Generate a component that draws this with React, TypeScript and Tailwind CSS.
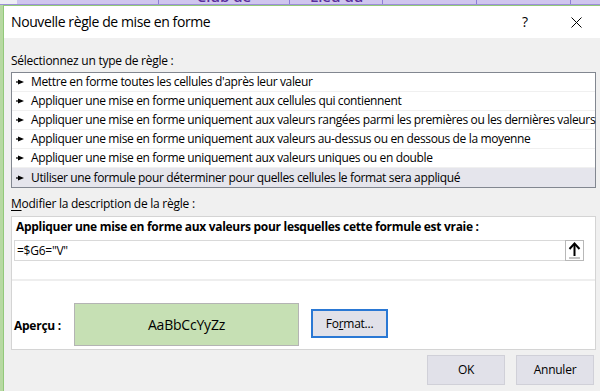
import React from "react";

const rows = [
  "Mettre en forme toutes les cellules d'après leur valeur",
  "Appliquer une mise en forme uniquement aux cellules qui contiennent",
  "Appliquer une mise en forme uniquement aux valeurs rangées parmi les premières ou les dernières valeurs",
  "Appliquer une mise en forme uniquement aux valeurs au-dessus ou en dessous de la moyenne",
  "Appliquer une mise en forme uniquement aux valeurs uniques ou en double",
  "Utiliser une formule pour déterminer pour quelles cellules le format sera appliqué",
];

function Pointer() {
  return (
    <svg width="8" height="6" viewBox="0 0 8 6" className="shrink-0">
      <rect x="0" y="2.4" width="3" height="1.2" fill="#000" />
      <polygon points="2,0.6 8,3 2,5.4" fill="#000" />
    </svg>
  );
}

export default function App() {
  const font = { fontFamily: '"Open Sans", "Noto Sans", sans-serif' };
  return (
    <div
      className="w-[600px] h-[391px] overflow-hidden bg-[#f0f0f0] flex flex-col text-black"
      style={font}
    >
      {/* spreadsheet strip behind */}
      <div className="h-[5px] shrink-0 flex overflow-hidden bg-[#cfc6ee] border-b border-[#9c8fd8]">
        <div className="w-[17px] bg-[#eeeef4]" />
        <div className="w-[142px] border-r border-[#8e7fd4]" />
        <div className="w-[131px] border-r border-[#8e7fd4] flex justify-center">
          <span className="text-[15px] leading-[15px] mt-[-11px] text-[#5a2f9c] font-semibold">Club de</span>
        </div>
        <div className="w-[93px] border-r border-[#8e7fd4] flex justify-start pl-[20px]">
          <span className="text-[15px] leading-[15px] mt-[-11px] text-[#5a2f9c] font-semibold">Lieu du</span>
        </div>
        <div className="w-[94px] border-r border-[#8e7fd4]" />
        <div className="w-[94px] border-r border-[#8e7fd4]" />
        <div className="flex-1" />
      </div>

      <div className="flex flex-1 min-h-0">
        <div className="w-[3px] shrink-0 bg-[#b7d9a2]" />
        <div className="flex-1 flex flex-col border-t border-l border-[#92c97a]">
          {/* Title bar */}
          <div className="h-[32px] shrink-0 bg-white flex items-center pl-[7px]">
            <span className="text-[14px] leading-[20px] tracking-[-0.4px]">Nouvelle règle de mise en forme</span>
            <span className="ml-auto text-[14px] leading-[20px] mr-[43px]">?</span>
            <svg width="11" height="11" viewBox="0 0 11 11" className="mr-[18px]">
              <path d="M0.5 0.5 L10.5 10.5 M10.5 0.5 L0.5 10.5" stroke="#000" strokeWidth="1" />
            </svg>
          </div>

          {/* Body */}
          <div className="flex-1 flex flex-col pl-[7px] pr-[4px] text-[12px] tracking-[-0.25px]">
            <div className="h-[16px] leading-[16px] mt-[15px]">Sélectionnez un type de règle :</div>
            <div className="mt-[3px] w-[585px] h-[116px] border border-[#828790] bg-white flex flex-col">
              {rows.map((r, i) => (
                <div
                  key={i}
                  className={
                    "h-[19px] shrink-0 flex items-center pl-[4px] gap-[7px] whitespace-nowrap tracking-[-0.36px] " +
                    (i === 5 ? "bg-[#e5e5ec]" : "border-b border-[#f0f0f0]")
                  }
                >
                  <Pointer />
                  <span className="leading-[18px]">{r}</span>
                </div>
              ))}
            </div>

            <div className="h-[16px] leading-[16px] mt-[8px]">
              <span className="underline underline-offset-2">M</span>odifier la description de la règle :
            </div>

            <div className="mt-[4px] w-[585px] h-[134px] border border-[#d4d4d4] bg-white flex flex-col">
              <div className="h-[20px] leading-[20px] pl-[4px] font-bold tracking-[-0.3px]">
                Appliquer une mise en forme aux valeurs pour lesquelles cette formule est vraie :
              </div>
              <div className="ml-[2px] mt-[3px] w-[570px] h-[21px] border border-[#d9d9d9] flex items-center">
                <span className="pl-[2px] leading-[18px]">=$G6="V"</span>
                <div className="ml-auto w-[19px] h-[21px] mt-[-1px] mr-[-1px] border border-[#b8b8b8] bg-white flex items-center justify-center">
                  <svg width="13" height="17" viewBox="0 0 13 17">
                    <path d="M6.5 2 L6.5 14" stroke="#000" strokeWidth="2" />
                    <path d="M1.5 7 L6.5 1.5 L11.5 7" stroke="#000" strokeWidth="2" fill="none" />
                    <rect x="1" y="15.5" width="11" height="1" fill="#8a8a8a" />
                  </svg>
                </div>
              </div>
              <div className="mt-[18px] h-[2px] bg-[#eeeeee]" />
              <div className="flex items-start mt-[22px]">
                <div className="mt-[15px] ml-[2px] w-[60px] font-bold leading-[16px]">Aperçu :</div>
                <div className="w-[225px] h-[43px] bg-[#c6e0b4] border border-[#b4b4b4] flex items-center justify-center text-[14px] tracking-[-0.2px]">
                  AaBbCcYyZz
                </div>
                <button className="ml-[12px] mt-[6px] w-[77px] h-[29px] bg-[#e1e1e9] border-2 border-[#2a78d4] flex items-center justify-center text-[12px]">
                  <span>
                    Fo<span className="underline underline-offset-1">r</span>mat...
                  </span>
                </button>
              </div>
            </div>

            <div className="flex justify-end gap-[11px] mt-[5px] mr-[2px]">
              <button className="w-[78px] h-[30px] bg-[#e1e1e9] border border-[#d0d0d8] text-[12px]">OK</button>
              <button className="w-[78px] h-[30px] bg-[#e1e1e9] border border-[#d0d0d8] text-[12px]">Annuler</button>
            </div>
          </div>
        </div>
      </div>
    </div>
  );
}
